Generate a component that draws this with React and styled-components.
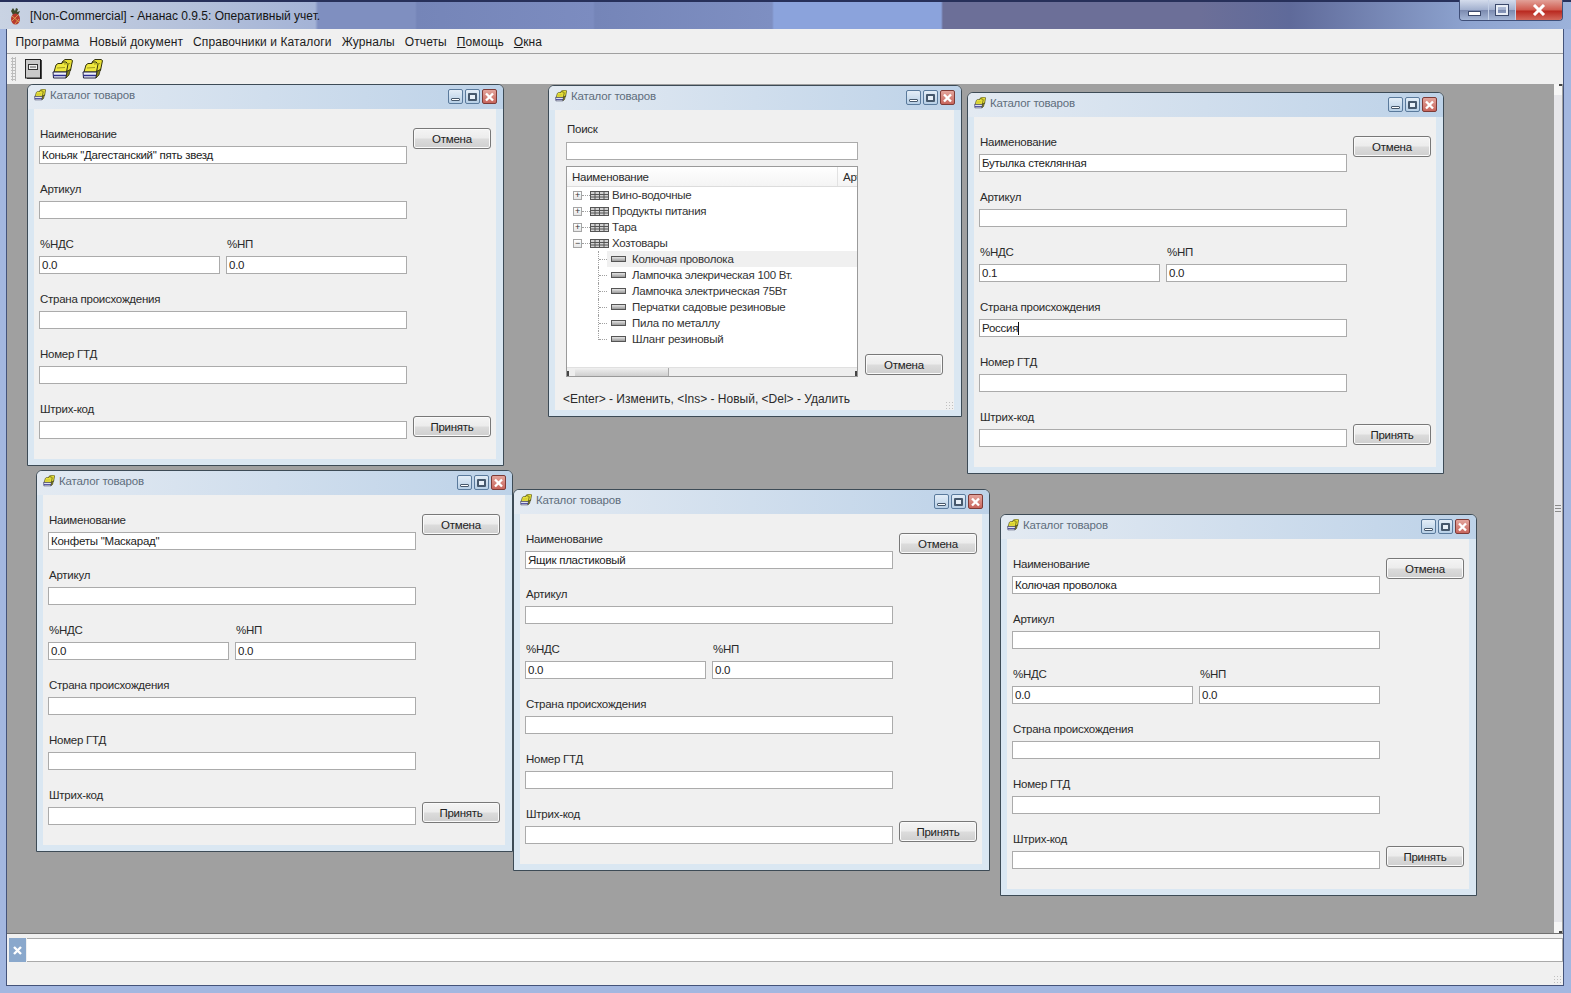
import React from "react";
import styled, { createGlobalStyle } from "styled-components";

const GlobalStyle = createGlobalStyle`
  html, body {
    margin: 0;
    padding: 0;
    overflow: hidden;
  }
  body {
    font-family: "Liberation Sans", Arial, sans-serif;
    font-size: 11.5px;
    letter-spacing: -0.25px;
    color: #1c1c1c;
  }
`;

const AppFrame = styled.div`
  width: 1571px;
  height: 993px;
  display: flex;
  flex-direction: column;
  overflow: hidden;
  background: #a3b7e0;
`;

const AppTitle = styled.div`
  height: 29px;
  flex: none;
  box-sizing: border-box;
  display: flex;
  align-items: center;
  padding-left: 10px;
  gap: 9px;
  position: relative;
  border-top: 2px solid #27305a;
  background: linear-gradient(90deg, #c9d3e3 0, #b3c0da 200px, #a4b3d6 315px, #7f8fc0 318px, #7f8fc0 415px,
    #7585b8 417px, #7c8cc0 593px, #7585b8 595px, #7e8fc2 772px, #8ba3dc 774px, #8ba3dc 941px, #6c6f98 943px,
    #6c6f98 1200px, #5f6a9a 1290px, #8ea4d0 1470px, #9cb2da 1571px);
  font-size: 12px;
  letter-spacing: 0;
  color: #141414;
  white-space: nowrap;
`;

const CaptionButtons = styled.div`
  position: absolute;
  right: 8px;
  top: -2px;
  display: flex;
  height: 20px;
  border: 1px solid #3f4f78;
  border-top: none;
  border-radius: 0 0 4px 4px;
  overflow: hidden;
`;

const CaptionButton = styled.div`
  width: ${(p) => p.$w}px;
  display: flex;
  align-items: center;
  justify-content: center;
  color: #fff;
  font-weight: bold;
  border-left: ${(p) => (p.$first ? "none" : "1px solid #c4d0e6")};
  background: ${(p) =>
    p.$close
      ? "linear-gradient(#e2a198, #cf5a4e 50%, #b9281f 55%, #d3695c)"
      : "linear-gradient(#d4dcec, #a3b1cf 48%, #7c8bb0 52%, #a5b6d6)"};
`;

const MinGlyph = styled.span`
  width: 11px;
  height: 3px;
  background: #fff;
  border: 1px solid #3c4a6c;
  margin-top: 6px;
`;

const MaxGlyph = styled.span`
  width: 8px;
  height: 6px;
  border: 2px solid #e8edf6;
  outline: 1px solid #3c4a6c;
`;

const Client = styled.div`
  flex: 1;
  min-height: 0;
  margin: 0 8px 8px 7px;
  display: flex;
  flex-direction: column;
  background: #f0f0f0;
  outline: 1px solid #44537a;
`;

const MenuBar = styled.div`
  height: 25px;
  flex: none;
  box-sizing: border-box;
  display: flex;
  align-items: center;
  gap: 10px;
  padding: 2px 0 0 8.5px;
  border-bottom: 1px solid #a0a0a0;
  font-size: 12px;
  letter-spacing: 0.1px;
`;

const Accel = styled.span`
  text-decoration: underline;
`;

const ToolBar = styled.div`
  height: 30px;
  flex: none;
  display: flex;
  align-items: center;
  padding-left: 4px;
`;

const ToolGrip = styled.div`
  width: 5px;
  height: 24px;
  margin-right: 9px;
  background-image: radial-gradient(#bdbdbd 1px, transparent 1.2px);
  background-size: 3px 3px;
`;

const ToolIcon = styled.span`
  display: flex;
  margin-right: ${(p) => p.$gap}px;
`;

const Workspace = styled.div`
  flex: 1;
  min-height: 0;
  display: flex;
  background: #a0a0a0;
  border-bottom: 1px solid #707070;
  padding-left: 1px;
`;

const Canvas = styled.div`
  flex: 1;
  position: relative;
`;

const VScroll = styled.div`
  width: 8px;
  margin-right: 1px;
  display: flex;
  flex-direction: column;
  background: #e6e6ea;
`;

const VScrollEnd = styled.div`
  height: 11px;
  flex: none;
  background: #f6f6f6;
  display: flex;
  align-items: ${(p) => (p.$down ? "flex-end" : "flex-start")};
  justify-content: flex-end;
  &::after {
    content: "";
    width: 3px;
    height: 2px;
    background: #444;
  }
`;

const VScrollTrack = styled.div`
  flex: 1;
  display: flex;
  align-items: center;
  justify-content: center;
  &::after {
    content: "";
    width: 6px;
    height: 7px;
    background: repeating-linear-gradient(#8a8a8a 0 1px, transparent 1px 3px);
  }
`;

const StatusArea = styled.div`
  height: 51px;
  flex: none;
  box-sizing: border-box;
  padding: 4px 0 0 2px;
  position: relative;
`;

const CommandRow = styled.div`
  display: flex;
  gap: 1px;
  height: 24px;
`;

const CloseBlock = styled.div`
  width: 17px;
  display: flex;
  align-items: center;
  justify-content: center;
  background: #8aa8cc;
`;

const CommandInput = styled.div`
  flex: 1;
  background: #fff;
  border-top: 1px solid #aaa;
  border-bottom: 1px solid #aaa;
  border-right: 1px solid #aaa;
`;

const ResizeGrip = styled.div`
  position: absolute;
  right: 1px;
  bottom: 1px;
  width: 9px;
  height: 9px;
  background-image: radial-gradient(#c0c0c0 0.8px, transparent 1px);
  background-size: 3px 3px;
`;

const ChildWindow = styled.div`
  position: absolute;
  left: ${(p) => p.$x}px;
  top: ${(p) => p.$y}px;
  width: ${(p) => p.$w}px;
  height: ${(p) => p.$h}px;
  box-sizing: border-box;
  display: flex;
  flex-direction: column;
  border: 1px solid #3d4b56;
  border-radius: 6px 6px 0 0;
  background: #dae7f2;
  padding: 0 7px 6px 6px;
`;

const ChildTitle = styled.div`
  height: 24px;
  flex: none;
  margin: 0 -7px 0 -6px;
  padding: 0 6px 4px 6px;
  box-sizing: border-box;
  display: flex;
  align-items: center;
  gap: 4px;
  border-radius: 5px 5px 0 0;
  background: linear-gradient(90deg, #e3eaf2, #bdd2e8);
  font-size: 11.5px;
  letter-spacing: -0.2px;
  color: #5e6d7c;
`;

const ChildTitleText = styled.span`
  flex: 1;
`;

const ChildButtons = styled.div`
  display: flex;
  gap: 2px;
  margin-top: 3px;
`;

const ChildButton = styled.div`
  width: 15px;
  height: 15px;
  box-sizing: border-box;
  border: 1px solid ${(p) => (p.$close ? "#7d3a36" : "#5a7a9c")};
  border-radius: 2px;
  display: flex;
  align-items: center;
  justify-content: center;
  background: ${(p) =>
    p.$close
      ? "linear-gradient(#e3a49c, #c8655c)"
      : "linear-gradient(#e3edf7, #b7cfe6)"};
`;

const ChildMin = styled.span`
  width: 9px;
  height: 3px;
  margin-top: 5px;
  box-sizing: border-box;
  border: 1px solid #46586c;
  border-radius: 1px;
  background: #fff;
`;

const ChildMax = styled.span`
  width: 9px;
  height: 8px;
  box-sizing: border-box;
  border: 2px solid #46586c;
  border-radius: 1px;
  background: #e8f0f8;
`;

const ChildBody = styled.div`
  flex: 1;
  min-height: 0;
  position: relative;
  background: #f0f0f0;
`;

const FormGrid = styled.div`
  display: grid;
  grid-template-columns: 368px 78px;
  column-gap: 6px;
  padding: 17px 0 0 5px;
`;

const Fields = styled.div`
  display: flex;
  flex-direction: column;
  gap: 17px;
`;

const Field = styled.div`
  display: flex;
  flex-direction: column;
  gap: 4px;
`;

const FieldPair = styled.div`
  display: grid;
  grid-template-columns: 181px 181px;
  column-gap: 6px;
`;

const FieldLabel = styled.label`
  height: 16px;
  line-height: 16px;
  padding-left: 1px;
  color: #2a2a2a;
`;

const TextBox = styled.div`
  height: 18px;
  box-sizing: border-box;
  display: flex;
  align-items: center;
  padding-left: 2px;
  background: #fff;
  border: 1px solid #ababab;
  color: #222;
  white-space: pre;
`;

const Caret = styled.span`
  width: 1px;
  height: 13px;
  background: #111;
`;

const Actions = styled.div`
  display: flex;
  flex-direction: column;
  justify-content: space-between;
  padding: 2px 0 2px;
`;

const PushButton = styled.div`
  width: 78px;
  height: 21px;
  box-sizing: border-box;
  display: flex;
  align-items: center;
  justify-content: center;
  border: 1px solid #787878;
  border-radius: 3px;
  box-shadow: inset 0 0 0 1px #fafafa;
  background: linear-gradient(#f4f4f4, #ececec 48%, #dcdcdc 52%, #cfcfcf);
  color: #222;
`;

const SearchLayout = styled.div`
  display: grid;
  grid-template-columns: 292px 78px;
  grid-template-rows: auto auto;
  column-gap: 7px;
  padding: 11px 0 0 11px;
`;

const SearchColumn = styled.div`
  display: flex;
  flex-direction: column;
  gap: 6px;
`;

const SearchField = styled(Field)`
  gap: 5px;
`;

const TreeBox = styled.div`
  height: 211px;
  box-sizing: border-box;
  display: flex;
  flex-direction: column;
  background: #fff;
  border: 1px solid #9a9a9a;
  overflow: hidden;
`;

const TreeHeader = styled.div`
  height: 20px;
  flex: none;
  box-sizing: border-box;
  display: grid;
  grid-template-columns: 270px 1fr;
  align-items: center;
  border-bottom: 1px solid #dcdcdc;
  background: linear-gradient(#fff, #f4f4f4);
  color: #2a2a2a;
`;

const HeaderCell = styled.div`
  height: 100%;
  display: flex;
  align-items: center;
  padding-left: 5px;
  overflow: hidden;
  white-space: nowrap;
  & + & {
    border-left: 1px solid #e2e2e2;
  }
`;

const TreeList = styled.div`
  flex: 1;
  min-height: 0;
`;

const GroupRow = styled.div`
  height: 16px;
  display: flex;
  align-items: center;
  padding-left: 6px;
  color: #333;
`;

const Expander = styled.span`
  width: 9px;
  height: 9px;
  flex: none;
  box-sizing: border-box;
  border: 1px solid #a5a5a5;
  background: linear-gradient(#fff, #e6e6e6);
  display: flex;
  align-items: center;
  justify-content: center;
  color: #333;
  font-size: 9px;
  line-height: 7px;
`;

const Dots = styled.span`
  width: ${(p) => p.$w}px;
  flex: none;
  border-top: 1px dotted #a0a0a0;
`;

const GroupName = styled.span`
  margin-left: 3px;
`;

const ItemRow = styled.div`
  height: 16px;
  display: flex;
  align-items: center;
  padding-left: 31px;
  color: #333;
`;

const ItemStem = styled.span`
  width: 9px;
  height: 16px;
  flex: none;
  align-self: flex-start;
  box-sizing: border-box;
  border-left: 1px dotted #a0a0a0;
  display: flex;
  align-items: center;
  ${(p) => p.$last && "height: 9px; align-items: flex-end;"}
  &::after {
    content: "";
    width: 8px;
    border-top: 1px dotted #a0a0a0;
  }
`;

const ItemBody = styled.span`
  flex: 1;
  height: 16px;
  display: flex;
  align-items: center;
  padding-left: 4px;
  background: ${(p) => (p.$selected ? "#f0f0f0" : "transparent")};
`;

const ItemIcon = styled.span`
  width: 15px;
  height: 6px;
  flex: none;
  box-sizing: border-box;
  margin-right: 6px;
  border: 1px solid #555;
  background: linear-gradient(#e4e4e4, #9a9a9a);
`;

const HScroll = styled.div`
  height: 8px;
  flex: none;
  display: flex;
  align-items: stretch;
  background: #eeeeee;
  border-top: 1px solid #e0e0e0;
`;

const HScrollArrow = styled.span`
  width: 8px;
  flex: none;
  display: flex;
  align-items: flex-end;
  justify-content: ${(p) => (p.$right ? "flex-end" : "flex-start")};
  &::after {
    content: "";
    width: 2px;
    height: 5px;
    background: #444;
  }
`;

const HScrollThumb = styled.span`
  width: 93px;
  background: linear-gradient(#f0f0f0, #cfcfcf);
  border-right: 1px solid #aaa;
`;

const HScrollRest = styled.span`
  flex: 1;
`;

const SearchActions = styled.div`
  display: flex;
  align-items: flex-end;
  padding-bottom: 2px;
`;

const HintText = styled.div`
  grid-column: 1 / span 2;
  margin: 14px 0 0 -3px;
  line-height: 16px;
  font-size: 12px;
  letter-spacing: 0;
  color: #2a2a2a;
  white-space: pre;
`;

const WindowGrip = styled(ResizeGrip)`
  right: 0;
  bottom: 0;
`;

function AppIcon() {
  return (
    <svg width="11" height="18" viewBox="0 0 11 18">
      <path d="M3 1l2 3 1-3 2 1-1 3 3-1-2 4H3L1 4z" fill="#3f4a2c" />
      <ellipse cx="5.5" cy="12" rx="4.5" ry="5.5" fill="#b83a2e" />
      <path d="M2 9l7 6M2 14l6-6M5 17l4-5" stroke="#d99a4c" strokeWidth="1" />
    </svg>
  );
}

function DocIcon() {
  return (
    <svg width="17" height="20" viewBox="0 0 17 20">
      <rect x="0.5" y="0.5" width="15" height="18.5" fill="#c9c9c9" stroke="#222" />
      <path d="M16 1v19H2" fill="none" stroke="#111" strokeWidth="1.5" />
      <rect x="3.5" y="5.5" width="9" height="5" fill="#efefef" stroke="#333" />
      <path d="M5 8h6" stroke="#555" />
    </svg>
  );
}

function FolderIcon({ size = 21 }) {
  return (
    <svg width={size} height={(size * 20) / 21} viewBox="0 0 21 20">
      <path d="M10 3l3-2.5h6l1.5 1-2 10-8 1z" fill="#e6de34" stroke="#33330c" />
      <path d="M2 13l2-7 2-1.5h4l1-1.5h3l2 2-1.5 8z" fill="#efe83e" stroke="#33330c" />
      <path d="M5 9l8-.5M12 5l6-.5" stroke="#a09b1c" />
      <path d="M1 13h14l-1 6H1.5z" fill="#eef0fa" stroke="#22224a" />
      <path d="M1.5 16.5h12.5" stroke="#2c2c90" strokeWidth="1.5" />
      <path d="M15 13l3.5-3-1.5 6-3 3z" fill="#88851e" stroke="#22220c" strokeWidth="0.7" />
    </svg>
  );
}

function TableIcon() {
  return (
    <svg width="19" height="9" viewBox="0 0 19 9" style={{ flex: "none" }}>
      <rect x="0.5" y="0.5" width="18" height="8" fill="#d2d2d2" stroke="#555" />
      <path d="M0 3.5h19M0 6h19M5 0v9M9.5 0v9M14 0v9" stroke="#555" strokeWidth="1" />
    </svg>
  );
}

function WindowControls() {
  return (
    <ChildButtons>
      <ChildButton>
        <ChildMin />
      </ChildButton>
      <ChildButton>
        <ChildMax />
      </ChildButton>
      <ChildButton $close>
        <svg width="11" height="10" viewBox="0 0 11 10">
          <path d="M2 1.5l7 7M9 1.5l-7 7" stroke="#fff" strokeWidth="2.4" />
        </svg>
      </ChildButton>
    </ChildButtons>
  );
}

function CatalogWindow({ x, y, w, h, children }) {
  return (
    <ChildWindow $x={x} $y={y} $w={w} $h={h}>
      <ChildTitle>
        <FolderIcon size={12} />
        <ChildTitleText>Каталог товаров</ChildTitleText>
        <WindowControls />
      </ChildTitle>
      <ChildBody>{children}</ChildBody>
    </ChildWindow>
  );
}

function ProductField({ label, value, caret }) {
  return (
    <Field>
      <FieldLabel>{label}</FieldLabel>
      <TextBox>
        {value}
        {caret && <Caret />}
      </TextBox>
    </Field>
  );
}

function ProductForm({ name, vat = "0.0", tax = "0.0", country = "", caret }) {
  return (
    <FormGrid>
      <Fields>
        <ProductField label="Наименование" value={name} />
        <ProductField label="Артикул" />
        <FieldPair>
          <ProductField label="%НДС" value={vat} />
          <ProductField label="%НП" value={tax} />
        </FieldPair>
        <ProductField label="Страна происхождения" value={country} caret={caret} />
        <ProductField label="Номер ГТД" />
        <ProductField label="Штрих-код" />
      </Fields>
      <Actions>
        <PushButton>Отмена</PushButton>
        <PushButton>Принять</PushButton>
      </Actions>
    </FormGrid>
  );
}

const groups = [
  { name: "Вино-водочные", sign: "+" },
  { name: "Продукты питания", sign: "+" },
  { name: "Тара", sign: "+" },
  { name: "Хозтовары", sign: "−" },
];

const items = [
  "Колючая проволока",
  "Лампочка элекрическая 100 Вт.",
  "Лампочка электрическая 75Вт",
  "Перчатки садовые резиновые",
  "Пила по металлу",
  "Шланг резиновый",
];

function SearchForm() {
  return (
    <SearchLayout>
      <SearchColumn>
        <SearchField>
          <FieldLabel>Поиск</FieldLabel>
          <TextBox />
        </SearchField>
        <TreeBox>
          <TreeHeader>
            <HeaderCell>Наименование</HeaderCell>
            <HeaderCell>Артикул</HeaderCell>
          </TreeHeader>
          <TreeList>
            {groups.map((g) => (
              <GroupRow key={g.name}>
                <Expander>{g.sign}</Expander>
                <Dots $w={8} />
                <TableIcon />
                <GroupName>{g.name}</GroupName>
              </GroupRow>
            ))}
            {items.map((name, i) => (
              <ItemRow key={name}>
                <ItemStem $last={i === items.length - 1} />
                <ItemBody $selected={i === 0}>
                  <ItemIcon />
                  {name}
                </ItemBody>
              </ItemRow>
            ))}
          </TreeList>
          <HScroll>
            <HScrollArrow />
            <HScrollThumb />
            <HScrollRest />
            <HScrollArrow $right />
          </HScroll>
        </TreeBox>
      </SearchColumn>
      <SearchActions>
        <PushButton>Отмена</PushButton>
      </SearchActions>
      <HintText>{"<Enter> - Изменить, <Ins> - Новый, <Del> - Удалить"}</HintText>
      <WindowGrip />
    </SearchLayout>
  );
}

export default function App() {
  return (
    <>
      <GlobalStyle />
      <AppFrame>
        <AppTitle>
          <AppIcon />
          [Non-Commercial] - Ананас 0.9.5: Оперативный учет.
          <CaptionButtons>
            <CaptionButton $w={28} $first>
              <MinGlyph />
            </CaptionButton>
            <CaptionButton $w={26}>
              <MaxGlyph />
            </CaptionButton>
            <CaptionButton $w={46} $close>
              <svg width="14" height="12" viewBox="0 0 14 12">
                <path d="M2 1l10 10M12 1L2 11" stroke="#fff" strokeWidth="3" />
              </svg>
            </CaptionButton>
          </CaptionButtons>
        </AppTitle>
        <Client>
          <MenuBar>
            <span>Программа</span>
            <span>Новый документ</span>
            <span>Справочники и Каталоги</span>
            <span>Журналы</span>
            <span>Отчеты</span>
            <span>
              <Accel>П</Accel>омощь
            </span>
            <span>
              <Accel>О</Accel>кна
            </span>
          </MenuBar>
          <ToolBar>
            <ToolGrip />
            <ToolIcon $gap={10}>
              <DocIcon />
            </ToolIcon>
            <ToolIcon $gap={9}>
              <FolderIcon />
            </ToolIcon>
            <ToolIcon $gap={0}>
              <FolderIcon />
            </ToolIcon>
          </ToolBar>
          <Workspace>
            <Canvas>
              <CatalogWindow x={19} y={0} w={477} h={382}>
                <ProductForm name={'Коньяк "Дагестанский" пять звезд'} />
              </CatalogWindow>
              <CatalogWindow x={540} y={1} w={414} h={332}>
                <SearchForm />
              </CatalogWindow>
              <CatalogWindow x={959} y={8} w={477} h={382}>
                <ProductForm name="Бутылка стеклянная" vat="0.1" country="Россия" caret />
              </CatalogWindow>
              <CatalogWindow x={28} y={386} w={477} h={382}>
                <ProductForm name={'Конфеты "Маскарад"'} />
              </CatalogWindow>
              <CatalogWindow x={505} y={405} w={477} h={382}>
                <ProductForm name="Ящик пластиковый" />
              </CatalogWindow>
              <CatalogWindow x={992} y={430} w={477} h={382}>
                <ProductForm name="Колючая проволока" />
              </CatalogWindow>
            </Canvas>
            <VScroll>
              <VScrollEnd />
              <VScrollTrack />
              <VScrollEnd $down />
            </VScroll>
          </Workspace>
          <StatusArea>
            <CommandRow>
              <CloseBlock>
                <svg width="11" height="11" viewBox="0 0 11 11">
                  <path d="M2 2l7 7M9 2l-7 7" stroke="#fff" strokeWidth="2.4" />
                </svg>
              </CloseBlock>
              <CommandInput />
            </CommandRow>
            <ResizeGrip />
          </StatusArea>
        </Client>
      </AppFrame>
    </>
  );
}
